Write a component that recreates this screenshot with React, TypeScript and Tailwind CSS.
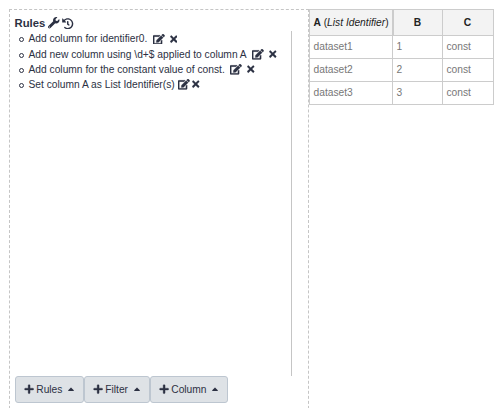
import React from "react";
import { FaCaretUp, FaEdit, FaHistory, FaPlus, FaTimes, FaWrench } from "react-icons/fa";

const rules = [
  { text: "Add column for identifier0.", gap: "ml-[5.5px]", close: "ml-[5px]", h: "h-[16px]" },
  { text: "Add new column using \\d+$ applied to column A", gap: "ml-[5.5px]", close: "ml-[5px]", h: "h-[15px]" },
  { text: "Add column for the constant value of const.", gap: "ml-[5.5px]", close: "ml-[5px]", h: "h-[15px]" },
  { text: "Set column A as List Identifier(s)", gap: "ml-[3px]", close: "ml-[2.5px]", h: "h-[15px]" },
];

const rows = [
  ["dataset1", "1", "const"],
  ["dataset2", "2", "const"],
  ["dataset3", "3", "const"],
];

function MenuButton({ label, width }: { label: string; width: string }) {
  return (
    <button className={`flex h-[27px] items-center rounded-[3px] border border-[#bdc6d0] bg-[#dee2e6] pl-[8px] ${width}`}>
      <FaPlus className="size-[10.24px] shrink-0 stroke-current stroke-[16]" />
      <span className="ml-[2px]">{label}</span>
      <FaCaretUp className="mb-[2px] ml-[3.6px] size-[10px] shrink-0" />
    </button>
  );
}

export default function App() {
  return (
    <div className="flex h-[408px] w-[501px] items-start overflow-hidden bg-white pl-[9px] pt-[9px] font-['Liberation_Sans',Arial,sans-serif] text-[10.24px] leading-[15.36px] text-[#2c3143]">
      <section className="flex h-[420px] w-[300px] shrink-0 flex-col border border-dashed border-[#c5c5c5] pl-[5px]">
        <header className="-ml-[0.5px] flex h-[21px] items-center pt-[6px]">
          <h1 className="text-[11.3px] font-bold">Rules</h1>
          <FaWrench className="mb-px ml-[3px] size-[11.5px]" />
          <FaHistory className="ml-[2.5px] size-[11.5px]" />
        </header>
        <div className="h-[345px] w-[277px] border-r border-[#c5c5c5]">
          <ol>
            {rules.map((rule) => (
              <li key={rule.text} className={`flex items-center whitespace-nowrap pl-[4px] ${rule.h}`}>
                <span className="mr-[4.5px] mt-px size-[5px] rounded-full border border-[#2c3143]" />
                <span>{rule.text}</span>
                <FaEdit className={`h-[10.5px] w-[11.8px] stroke-current stroke-[12] ${rule.gap}`} />
                <FaTimes className={`h-[10.24px] w-[7.5px] stroke-current stroke-[12] ${rule.close}`} />
              </li>
            ))}
          </ol>
        </div>
        <div className="flex">
          <MenuButton label="Rules" width="w-[69px]" />
          <MenuButton label="Filter" width="w-[66px]" />
          <MenuButton label="Column" width="w-[78px]" />
        </div>
      </section>
      <table className="w-[185px] shrink-0 table-fixed border-separate border-spacing-0 border-l border-t border-[#ccc] leading-[21px]">
        <colgroup>
          <col className="w-[83px]" />
          <col className="w-[50px]" />
          <col className="w-[51px]" />
        </colgroup>
        <thead>
          <tr className="h-[26px] bg-[#f3f3f3] text-[#222]">
            <th className="whitespace-nowrap border-b border-r border-[#ccc] p-0 font-normal">
              <b>A</b> (<i>List Identifier</i>)
            </th>
            <th className="border-b border-l border-r border-[#ccc] p-0 pr-px">B</th>
            <th className="border-b border-r border-[#ccc] p-0 pr-px">C</th>
          </tr>
        </thead>
        <tbody className="text-[#777]">
          {rows.map((row) => (
            <tr key={row[0]} className="h-[23px]">
              {row.map((cell, index) => (
                <td key={index} className="border-b border-r border-[#ccc] pb-px pl-[3.5px] pr-0 pt-0">
                  {cell}
                </td>
              ))}
            </tr>
          ))}
        </tbody>
      </table>
    </div>
  );
}
